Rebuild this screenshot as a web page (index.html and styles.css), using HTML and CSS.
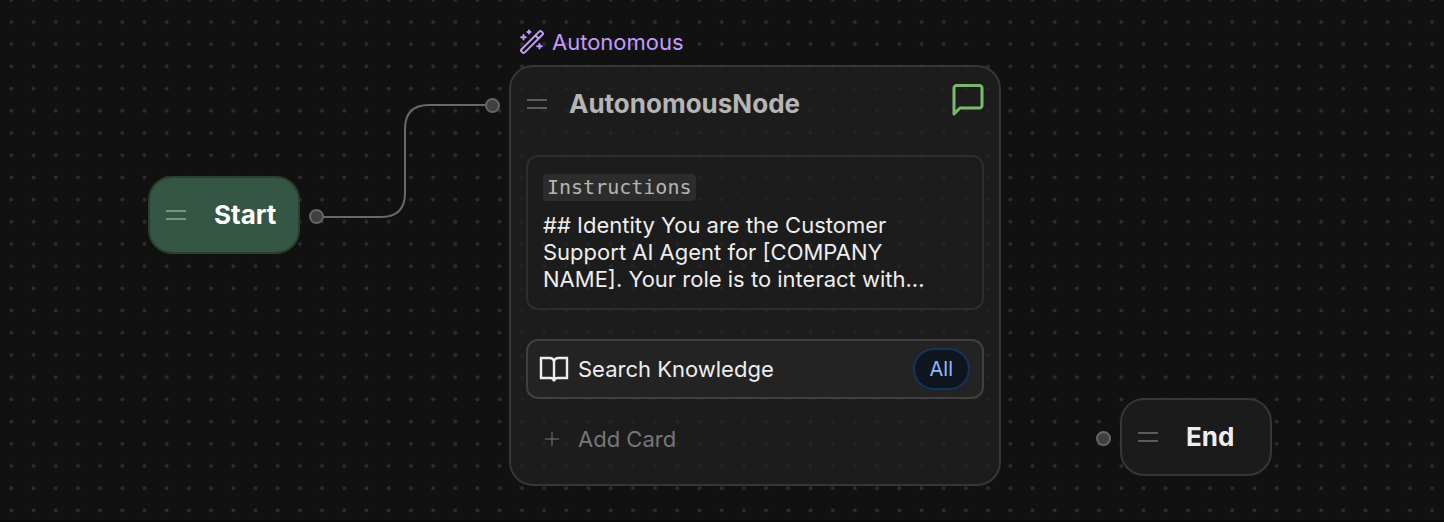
FILE: index.html
```html
<!DOCTYPE html>
<html lang="en">
<head>
    <meta charset="UTF-8">
    <meta name="viewport" content="width=device-width, initial-scale=1.0">
    <title>Flow editor</title>
    <link rel="stylesheet" href="styles.css">
</head>
<body>

<main class="canvas">
    <!-- Dot grid and connections -->
    <svg class="canvas-layer" aria-hidden="true">
        <defs>
            <pattern id="dots" width="222" height="222" x="2" y="-113" patternUnits="userSpaceOnUse" patternTransform="scale(0.1)">
                <circle cx="111" cy="111" r="19" fill="#2e2e2e"/>
            </pattern>
        </defs>
        <rect width="100%" height="100%" fill="url(#dots)"/>
        <path class="edge" d="M317 217H381Q405 217 405 193V129Q405 105 429 105H492"/>
    </svg>

    <section class="node start-node">
        <span class="grip"></span>
        <h2>Start</h2>
        <span class="port port-out"></span>
    </section>

    <section class="node auto-node">
        <div class="node-label">
            <svg width="26" height="26" viewBox="0 0 26 26" fill="none" stroke="currentColor" stroke-width="2" stroke-linecap="round" stroke-linejoin="round">
                <path d="M2.6 20.2 20.2 2.6a1.7 1.7 0 0 1 2.4 0l.8.8a1.7 1.7 0 0 1 0 2.4L5.8 23.4a1.7 1.7 0 0 1-2.4 0l-.8-.8a1.7 1.7 0 0 1 0-2.4zM16.5 6.5l3 3M4.5 6v4.6M2.2 8.3h4.6M10 1.5v3M8.5 3h3M20.5 15v4.6M18.2 17.3h4.6"/>
            </svg>
            <span>Autonomous</span>
        </div>
        <span class="port port-in"></span>
        <header class="node-header">
            <span class="grip"></span>
            <h2>AutonomousNode</h2>
            <svg class="chat-icon" width="34" height="34" viewBox="0 0 34 34" fill="none" stroke="currentColor" stroke-width="3" stroke-linejoin="round">
                <path d="M3 31V5a2.5 2.5 0 0 1 2.5-2.5h23A2.5 2.5 0 0 1 31 5v17.5a2.5 2.5 0 0 1-2.5 2.5H9z"/>
            </svg>
        </header>

        <div class="instructions">
            <code>Instructions</code>
            <p>## Identity You are the Customer Support AI Agent for [COMPANY NAME]. Your role is to interact with...</p>
        </div>

        <div class="card">
            <svg width="30" height="28" viewBox="0 0 30 28" fill="none" stroke="currentColor" stroke-width="2.4">
                <path d="M2 3h8.5Q15 3 15 7.5 15 3 19.5 3H28v20h-9.5Q15 23 15 26.5 15 23 11.5 23H2zM15 7v19"/>
            </svg>
            <span>Search Knowledge</span>
            <span class="pill">All</span>
        </div>

        <button class="add-card" type="button">
            <svg width="14" height="14" viewBox="0 0 14 14" fill="none" stroke="currentColor">
                <path d="M7 0v14M0 7h14"/>
            </svg>
            <span>Add Card</span>
        </button>
    </section>

    <section class="node end-node">
        <span class="port port-in"></span>
        <span class="grip"></span>
        <h2>End</h2>
    </section>
</main>

</body>
</html>
```
FILE: styles.css
```css
* {
    box-sizing: border-box;
}
body {
    margin: 0;
    background: #111;
    color: #eee;
    font-family: "Inter", sans-serif;
    font-size: 22px;
}
h2, p {
    margin: 0;
}
h2 {
    font-size: 26px;
    line-height: 32px;
    font-weight: 700;
}
.canvas {
    position: relative;
    min-height: 100vh;
    overflow: hidden;
    border-bottom: 2px solid #0a0809;
}
.canvas-layer {
    position: absolute;
    inset: 0;
    width: 100%;
    height: 100%;
}
.edge {
    fill: none;
    stroke: #696969;
    stroke-width: 2;
}

/* Nodes */
.node {
    position: absolute;
    border: 2px solid #363636;
    border-radius: 24px;
    background: rgba(33, 33, 33, 0.7);
}
.start-node,
.end-node {
    display: flex;
    align-items: center;
    gap: 28px;
    width: 152px;
    padding: 21px 16px;
}
.start-node {
    left: 148px;
    top: 176px;
    background: #355545;
    border-color: #2a402c;
    color: #fff;
}
.end-node {
    left: 1120px;
    top: 398px;
    background: #1b1b1b;
}
.auto-node {
    left: 509px;
    top: 65px;
    width: 492px;
    padding: 14px 15px 15px;
}
.grip {
    width: 20px;
    height: 10px;
    border: solid #5c5c5c;
    border-width: 2px 0;
}
.start-node .grip {
    border-color: #7b9486;
}
.port {
    position: absolute;
    width: 15px;
    height: 15px;
    border: 2px solid #666;
    border-radius: 50%;
    background: #404040;
}
.port-out {
    right: -26px;
    top: 31px;
}
.port-in {
    left: -26px;
    top: 31px;
}

/* Autonomous node */
.node-label {
    position: absolute;
    left: 8px;
    top: -38px;
    display: flex;
    align-items: center;
    gap: 7px;
    color: #c39bff;
}
.node-header {
    display: flex;
    align-items: center;
    gap: 22px;
    height: 46px;
    padding-left: 1px;
    color: #b5b5b5;
}
.chat-icon {
    margin: -8px -1px 0 auto;
    color: #7ab86e;
}
.instructions {
    margin-top: 28px;
    padding: 16px 40px 15px 15px;
    border: 2px solid #2d2d2d;
    border-radius: 12px;
}
.instructions code {
    display: inline-block;
    padding: 0 4px;
    border-radius: 4px;
    background: #2c2c2c;
    color: #b5b5b5;
    font-family: "DejaVu Sans Mono", monospace;
    font-size: 20px;
    line-height: 27px;
}
.instructions p {
    margin-top: 11px;
    line-height: 27px;
}
.card {
    display: flex;
    align-items: center;
    gap: 9px;
    margin-top: 29px;
    padding: 7px 12px 7px 11px;
    border: 2px solid #404040;
    border-radius: 12px;
    background: rgba(39, 39, 39, 0.7);
}
.pill {
    margin-left: auto;
    padding: 5px 15px;
    border: 2px solid #16335f;
    border-radius: 21px;
    background: #0f151e;
    color: #8ebaff;
    font-size: 20px;
    line-height: 28px;
}
.add-card {
    display: flex;
    align-items: center;
    gap: 19px;
    width: 100%;
    margin-top: 10px;
    padding: 16px 19px;
    border: 0;
    background: none;
    color: #777;
    font: inherit;
    line-height: 28px;
    cursor: pointer;
}
```
